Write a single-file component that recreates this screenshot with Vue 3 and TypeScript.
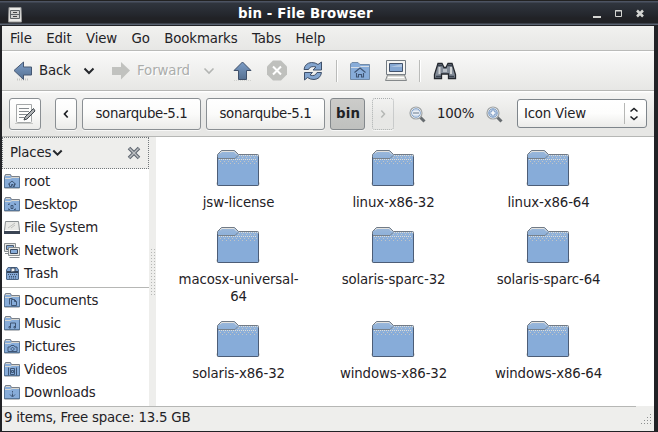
<script setup lang="ts">
interface Place { label: string; icon: string; emblem?: string }

const menus: string[] = ['File', 'Edit', 'View', 'Go', 'Bookmarks', 'Tabs', 'Help']

const places: Place[] = [
  { label: 'root', icon: 'folder', emblem: 'M4 10.5 8 7l4 3.500M5.500 9.500v3h2v-2h1.500v2h1.500v-3' },
  { label: 'Desktop', icon: 'folder', emblem: 'M4.500 8V7H6M10 7h1.500v1M4.500 11.500v1H6M10 12.500h1.500v-1M7 8.500h2v3H7z' },
  { label: 'File System', icon: 'drive' },
  { label: 'Network', icon: 'network' },
  { label: 'Trash', icon: 'trash' },
]

const bookmarks: Place[] = [
  { label: 'Documents', icon: 'folder', emblem: 'M5.500 11.500v-6h3M7.500 6.500h3l2 2v4h-5zM10.500 6.500v2h2' },
  { label: 'Music', icon: 'folder', emblem: 'M6.500 11V7h5v4M5 10.500h1.500V12H5zM10 10.500h1.500V12H10z' },
  { label: 'Pictures', icon: 'folder', emblem: 'M4 8h2l1-1.500h3L11 8h2v4.500H4zM8.500 8.500a1.500 1.500 0 1 0 .1 0' },
  { label: 'Videos', icon: 'folder', emblem: 'M4.500 5.500v8M12.500 5.500v8M6.500 6.500h4v6h-4zM7.500 8.500h2v2h-2z' },
  { label: 'Downloads', icon: 'folder', emblem: 'M8.500 6v1.500M8.500 8.500v3M6 9.500l2.500 2.500L11 9.500' },
]

const folders: string[][] = [
  ['jsw-license', 'linux-x86-32', 'linux-x86-64'],
  ['macosx-universal-64', 'solaris-sparc-32', 'solaris-sparc-64'],
  ['solaris-x86-32', 'windows-x86-32', 'windows-x86-64'],
]
</script>

<template>
  <div class="window">
    <svg class="defs" width="0" height="0">
      <defs>
        <linearGradient id="gTop" x1="0" y1="0" x2="0" y2="1">
          <stop offset="0" stop-color="#9bb8da" /><stop offset=".35" stop-color="#87acd9" />
        </linearGradient>
        <linearGradient id="gArrow" x1="0" y1="0" x2="0" y2="1">
          <stop offset="0" stop-color="#7d9ec8" /><stop offset="1" stop-color="#557091" />
        </linearGradient>
        <symbol id="big-folder" viewBox="0 0 44 38">
          <path d="M0 33.500h44" stroke="#deded9" stroke-width="2" />
          <path d="M1.500 34V4.500l4-4h13l4 4h19q1 0 1 1v29q0 1-1 1h-39q-1 0-1-1z" fill="url(#gTop)" stroke="#727b86" />
          <path d="M1.500 7v27.500q0 1 1 1h39q1 0 1-1V7" fill="none" stroke="#4c5d77" />
          <path d="M4 3l2-1.500h12l3 3" fill="none" stroke="#e3e2df" />
          <path d="M2 8.500h17l3-3" fill="none" stroke="#77818c" />
          <path d="M23 5.500h19M3 9.500h38" stroke="#dfded9" stroke-dasharray="1 1" />
          <path d="M22 7.500h19M4 11.500h37M6 13.500h33" stroke="#c3c5c5" stroke-dasharray="1 3" />
        </symbol>
        <symbol id="folder" viewBox="0 0 16 16">
          <path d="M.5 14V2.500L1.500.5h5l1 2h8V14z" fill="#87acd9" stroke="#7a8088" />
          <path d="M.5 4v9.500h15V4" fill="none" stroke="#577699" />
          <path d="M1 4.500h5l2-1h7M2 1.500h4" fill="none" stroke="#d7d7d2" />
        </symbol>
        <symbol id="drive" viewBox="0 0 16 16">
          <path d="M1.500 1.500h13l1 9v3H.5v-3z" fill="#e9e9e6" stroke="#898e91" />
          <path d="M0 11h16v3H0z" fill="#3b4554" /><path d="M1 10.500h14" stroke="#fff" />
          <path d="M4 8l7-5M7 8l4-3" stroke="#bfc0bd" />
        </symbol>
        <symbol id="network" viewBox="0 0 16 16">
          <path d="M.5.5h11v8H.5zM1 10.500h5" fill="#e7e7e4" stroke="#898e91" />
          <path d="M2.500 2.500h7v4h-7z" fill="#87acd9" stroke="#4b5a6f" />
          <path d="M4.500 4.500h11v8h-11zM5.500 14.500h10" fill="#e7e7e4" stroke="#898e91" />
          <path d="M6.500 6.500h7v4h-7z" fill="#87acd9" stroke="#3b4a60" />
        </symbol>
        <symbol id="trash" viewBox="0 0 16 16">
          <path d="M2.500 13V4l1.500-2.500h9L14.500 4v9q0 .5-.5.5H3q-.5 0-.5-.5z" fill="#83a7d4" stroke="#4a6484" />
          <path d="M3 6h11" stroke="#33435a" stroke-width="2" />
          <path d="M7 5.500V2h4v3" fill="#f5f5f3" stroke="#33435a" />
          <path d="M4 8.500h9M5 10.500h7M5 12h7" stroke="#3e5371" stroke-dasharray="1 1" />
        </symbol>
        <symbol id="lens" viewBox="0 0 18 18">
          <path d="M11 11l4.500 4.500" stroke="#676c70" stroke-width="3" />
          <circle cx="7" cy="7" r="6" fill="#f0f2f3" stroke="#a0a4a6" stroke-width="1.200" />
          <circle cx="7" cy="7" r="4.300" fill="#d3deec" stroke="#7e9fc9" />
        </symbol>
      </defs>
    </svg>

    <header class="titlebar">
      <svg class="app-icon" width="14" height="16" viewBox="0 0 14 16">
        <path d="M1 .5h12l.5 14.500H.5z" fill="#e9e9e6" stroke="#999" />
        <path d="M2.500 3.500h9v8h-9zM3 7.500h8" fill="#d0d1cf" stroke="#5d6366" /><path d="M5 5.500h4M5 9.500h4" stroke="#444" />
      </svg>
      <span class="title">bin - File Browser</span>
      <svg class="controls" width="54" height="10" viewBox="0 0 54 10">
        <path d="M1 8h8" stroke="#d5d6d3" stroke-width="2" />
        <path d="M23.500 1.500h6v6h-6zM23 2h7" fill="none" stroke="#d5d6d3" />
        <path d="M45 1.500l6 6M51 1.500l-6 6" stroke="#d5d6d3" stroke-width="2.500" />
      </svg>
    </header>

    <nav class="menubar"><span v-for="m in menus" :key="m">{{ m }}</span></nav>

    <div class="toolbar">
      <svg class="i-back" width="20" height="22" viewBox="0 0 20 22">
        <path d="M4 19.500h12" stroke="#c5c6c3" stroke-dasharray="1 1" stroke-width="2" />
        <path d="M1 10.500 10.500 2v5H18.500v8h-8v4.500z" fill="url(#gArrow)" stroke="#465873" />
      </svg>
      <span class="t-back">Back</span>
      <svg class="i-chev" width="12" height="8" viewBox="0 0 12 8"><path d="M1.500 1.500 6 6l4.500-4.500" fill="none" stroke="#25282c" stroke-width="2" /></svg>
      <svg class="i-fwd" width="20" height="22" viewBox="0 0 20 22">
        <path d="M19 10.500 10 2v5H1v8h9v4.500z" fill="#c1c2bf" />
      </svg>
      <span class="t-fwd">Forward</span>
      <svg class="i-chev dim" width="12" height="8" viewBox="0 0 12 8"><path d="M1.500 1.500 6 6l4.500-4.500" fill="none" stroke="#b3b5b3" stroke-width="1.600" /></svg>
      <svg class="i-up" width="20" height="22" viewBox="0 0 20 22">
        <path d="M1 20.500h18" stroke="#d0d1ce" stroke-dasharray="1 1" />
        <path d="M9.500 2 18 10.500h-4.500v9h-8v-9H1z" fill="url(#gArrow)" stroke="#3f506a" />
      </svg>
      <svg class="i-stop" width="22" height="22" viewBox="0 0 22 22">
        <path d="M7 .5h8l6 6v8l-6 6H7l-6-6v-8z" fill="#bfc0bd" /><path d="M7 6.500l8 8M15 6.500l-8 8" stroke="#fff" stroke-width="2" />
      </svg>
      <svg class="i-refresh" width="22" height="22" viewBox="0 0 22 22">
        <path d="M2 9.500Q3 3 9.500 2.500q4 0 6.500 2L19.500 2v8h-8.500l3-3Q8 5.500 6.500 9.500z" fill="#83a5cf" stroke="#3f506a" />
        <path d="M19.500 12.500Q18.500 19 12 19.500q-4 0-6.500-2l-3 2.500v-7.500h8l-2.500 2.500Q13 17 15 12.500z" fill="#83a5cf" stroke="#3f506a" />
      </svg>
      <i class="sep s1"></i>
      <svg class="i-home" width="22" height="20" viewBox="0 0 22 20">
        <path d="M1.500 18.500V3L3 1.500h6l2 2h9.500v15z" fill="#87acd9" stroke="#728ba8" />
        <path d="M2 6.500h8l2-1h8" fill="none" stroke="#d4dce5" />
        <path d="M5.500 11.500 11 7l5.500 4.500M7.500 12v4h2v-2.500h3V16h2v-4" fill="none" stroke="#3f5473" stroke-width="1.100" />
      </svg>
      <svg class="i-computer" width="22" height="22" viewBox="0 0 22 22">
        <path d="M1.500.5h19v14h-19z" fill="#f5f5f3" stroke="#727a81" /><path d="M4.500 3.500h13v8h-13z" fill="#84a7d3" stroke="#42526b" />
        <path d="M5 7l12-3v3H5z" fill="#adc4e0" /><path d="M2.500 15h17l2 5.500H.5z" fill="#deded9" stroke="#85898b" /><path d="M3 17.500h16" stroke="#fff" />
      </svg>
      <i class="sep s2"></i>
      <svg class="i-find" width="24" height="20" viewBox="0 0 24 20">
        <path d="M5 2.500h4l2 4h2l2-4h4l3.500 11v4h-7V13h-7v4.500h-7v-4z" fill="#828b97" stroke="#22262c" stroke-width="1.300" />
        <path d="M4.500 4.500h5M14.500 4.500h5M3 15.500h5M16 15.500h5" stroke="#39424e" stroke-width="1.500" />
        <path d="M6.500 6v7M18 6v7" stroke="#cfd2d4" stroke-width="2" /><path d="M10 8h4v3h-4z" fill="#b8bec5" />
      </svg>
    </div>

    <div class="locationbar">
      <button class="btn edit">
        <svg width="22" height="22" viewBox="0 0 22 22">
          <path d="M2.500 1.500h15v17q0 1-1 1h-13q-1 0-1-1z" fill="#fdfdfc" stroke="#a4a7a8" /><path d="M1 20.500h18" stroke="#c8c9c6" />
          <path d="M5 5.500h10M5 8.500h10M5 11.500h9M5 14.500h5" stroke="#858a8e" />
          <path d="M19.500 5.500 11 14l-1 3 3-1 8-8z" fill="#aeb1b3" stroke="#3f464d" />
        </svg>
      </button>
      <button class="btn prev"><svg width="6" height="10" viewBox="0 0 6 10"><path d="M4.700 1.500 1.500 5l3.200 3.500" fill="none" stroke="#1d2024" stroke-width="1.700" /></svg></button>
      <button class="btn crumb">sonarqube-5.1</button>
      <button class="btn crumb">sonarqube-5.1</button>
      <button class="btn current">bin</button>
      <button class="btn next"><svg width="6" height="10" viewBox="0 0 6 10"><path d="M1.300 1.500 4.500 5 1.300 8.500" fill="none" stroke="#b5b7b5" stroke-width="1.500" /></svg></button>
      <svg class="zoom out" width="18" height="18"><use href="#lens" /><path d="M3.500 7h7" stroke="#fff" stroke-width="3" /><path d="M4 7h6" stroke="#516680" /></svg>
      <span class="percent">100%</span>
      <svg class="zoom in" width="18" height="18"><use href="#lens" /><path d="M3.500 7h7M7 3.500v7" stroke="#7495c2" stroke-width="3" /><path d="M4.500 7h5M7 4.500v5" stroke="#fff" stroke-width="1.600" /></svg>
      <div class="select"><span>Icon View</span><i></i>
        <svg width="10" height="14" viewBox="0 0 10 14"><path d="M1.500 4.500 5 1.500l3.500 3M1.500 9.500 5 12.500l3.500-3" fill="none" stroke="#1d2024" stroke-width="1.600" /></svg>
      </div>
    </div>

    <div class="body">
      <aside class="sidebar">
        <div class="places-head">
          <span>Places</span>
          <svg class="caret" width="11" height="8" viewBox="0 0 11 8"><path d="M1.300 1.500 5.500 5.700l4.200-4.200" fill="none" stroke="#25282c" stroke-width="2" /></svg>
          <svg class="close" width="14" height="14" viewBox="0 0 14 14"><path d="M2 2l10 10M12 2 2 12" stroke="#5e6670" stroke-width="3.600" /><path d="M2.500 2.500l9 9M11.500 2.500l-9 9" stroke="#bfc2c4" stroke-width="1.400" /></svg>
        </div>
        <ul class="list">
          <li v-for="p in places" :key="p.label">
            <svg width="16" height="16"><use :href="'#' + p.icon" /><path v-if="p.emblem" :d="p.emblem" fill="none" stroke="#3f5676" /></svg>{{ p.label }}
          </li>
        </ul>
        <ul class="list second">
          <li v-for="p in bookmarks" :key="p.label">
            <svg width="16" height="16"><use :href="'#' + p.icon" /><path :d="p.emblem" fill="none" stroke="#3f5676" /></svg>{{ p.label }}
          </li>
        </ul>
      </aside>
      <div class="splitter"><i></i></div>
      <main class="icons">
        <div v-for="(row, r) in folders" :key="r" class="row">
          <figure v-for="f in row" :key="f">
            <svg width="44" height="38"><use href="#big-folder" /></svg>
            <figcaption>{{ f }}</figcaption>
          </figure>
        </div>
      </main>
    </div>

    <footer class="status"><span>9 items, Free space: 13.5 GB</span>
      <svg width="12" height="12" viewBox="0 0 12 12"><path d="M10 .5h1M7 3.500h1M10 3.500h1M4 6.500h1M7 6.500h1M10 6.500h1M1 9.500h1M4 9.500h1M7 9.500h1M10 9.500h1" stroke="#8c8f90" /></svg>
    </footer>
  </div>
</template>

<style>
body { margin: 0; background: #212226; overflow: hidden; }
</style>

<style scoped>
* { box-sizing: border-box; }
.window {
  width: 658px; height: 432px; display: flex; flex-direction: column;
  padding: 0 4px 1px 2px; background: #212226; color: #1f2226;
  font: 13.33px/16px "DejaVu Sans", sans-serif; letter-spacing: -.2px;
}
.window svg { display: block; flex: none; }
.titlebar {
  height: 26px; flex: none; display: flex; align-items: flex-start; color: #fff; margin-right: -4px; margin-left: -2px;
  background: linear-gradient(#222 0 1px, #4c5362 1px 2px, #30353e 3px, #24272d 15px, #212226 18px, #212226 23px, #596270 24px 25px, #212226 25px);
}
.app-icon { margin: 7px 0 0 8px; }
.title { margin: 6px 0 0 216px; font-weight: bold; width: 136px; white-space: nowrap; letter-spacing: .15px; }
.controls { margin: 9px 0 0 218px; }
.menubar {
  height: 25px; flex: none; display: flex; gap: 14.5px; padding: 5px 8px 0; border-bottom: 1px solid #babbb9;
  background: linear-gradient(#f1f1ef, #e7e7e5); letter-spacing: -.14px;
}
.toolbar {
  height: 40px; flex: none; display: flex; align-items: center; padding-left: 11px; border-bottom: 1px solid #b6b7b5;
  background: linear-gradient(#fff 0 1px, #f8f8f7 2px, #e7e7e5);
}
.t-back { margin-left: 6px; width: 32px; }
.window .i-chev { margin-left: 12px; }
.window .i-fwd { margin-left: 16px; }
.t-fwd { margin-left: 6px; width: 54px; color: #abadab; text-shadow: 1px 1px #fff; letter-spacing: -.1px; }
.window .i-up { margin-left: 18px; }
.window .i-stop { margin-left: 13px; }
.window .i-refresh { margin-left: 14px; }
.sep { width: 2px; height: 22px; background: #babbb9; border-right: 1px solid #fff; }
.s1 { margin-left: 12px; }
.window .i-home { margin-left: 11px; }
.window .i-computer { margin-left: 14px; }
.s2 { margin-left: 12px; }
.window .i-find { margin-left: 12px; }
.locationbar {
  height: 46px; flex: none; display: flex; align-items: center; padding: 1px 7px 0; border-bottom: 1px solid #b6b7b5;
  background: linear-gradient(#fff 0 1px, #f5f5f4 2px, #e7e7e5 26px);
}
.btn {
  height: 32px; padding: 0; display: flex; align-items: center; justify-content: center; font: inherit; color: inherit;
  border: 1px solid #8a8f93; border-radius: 3px; background: linear-gradient(#fff, #fbfbfa 50%, #ebebe9);
  box-shadow: 0 1px #f8f8f7;
}
.edit { width: 32px; }
.prev { width: 22px; margin-left: 14px; }
.crumb { width: 119px; margin-left: 5px; letter-spacing: -.35px; }
.current { width: 35px; margin-left: 5px; padding-left: 1px; font-weight: bold; letter-spacing: .2px; background: linear-gradient(#ccccca, #bfc0be); border-color: #83888c; }
.next { width: 22px; margin-left: 7px; background: transparent; border: 1px dotted #aaaeaf; }
.window .out { margin: 1px 0 0 15px; }
.percent { width: 40px; margin: 0 0 1px 10px; white-space: nowrap; }
.window .in { margin: 1px 0 0 9px; }
.select {
  width: 130px; height: 29px; margin: 0 0 1px 13px; padding: 0 7px 0 6px; display: flex; align-items: center;
  border: 1px solid #7e858b; border-radius: 3px; background: linear-gradient(#fff, #fdfdfc 50%, #ebebe9);
}
.select span { width: 101px; }
.select i { width: 1px; height: 21px; background: #b6b7b5; }
.window .select svg { margin-left: 4px; }
.body { flex: 1; min-height: 0; display: flex; background: #fff; }
.sidebar { width: 147px; flex: none; }
.places-head { height: 32px; display: flex; align-items: center; padding: 0 7px 0 7px; background: #eeeeec; border: 1px dotted #73787c; }
.window .caret { margin-left: 1px; }
.window .close { margin-left: auto; }
.list { list-style: none; margin: 0; padding: 1px 0 2px 2px; }
.list li { height: 23px; display: flex; align-items: center; gap: 4px; white-space: nowrap; }
.second { border-top: 1px solid #b6b7b5; }
.splitter { width: 7px; background: #eeeeec; display: flex; align-items: center; justify-content: center; }
.splitter i { width: 5px; height: 48px; background: radial-gradient(circle, #b6b7b5 0.7px, transparent 0.8px) 0 0 / 3px 3px; }
.icons { flex: 1; padding: 13px 0 0 4px; letter-spacing: -.13px; }
.row { display: flex; }
.row figure { margin: 0; width: 155px; height: 77px; display: flex; flex-direction: column; align-items: center; text-align: center; }
.row:nth-child(2) figure { height: 94px; }
figcaption { margin-top: 6px; padding-left: 2px; line-height: 17px; max-width: 126px; }
.status {
  height: 25px; flex: none; display: flex; align-items: flex-end; justify-content: space-between;
  padding: 0 2px 5px 2px; background: linear-gradient(to right, #b6b7b5 0 634px, transparent 634px) 0 0 / 100% 1px no-repeat #eeeeec;
}
</style>
